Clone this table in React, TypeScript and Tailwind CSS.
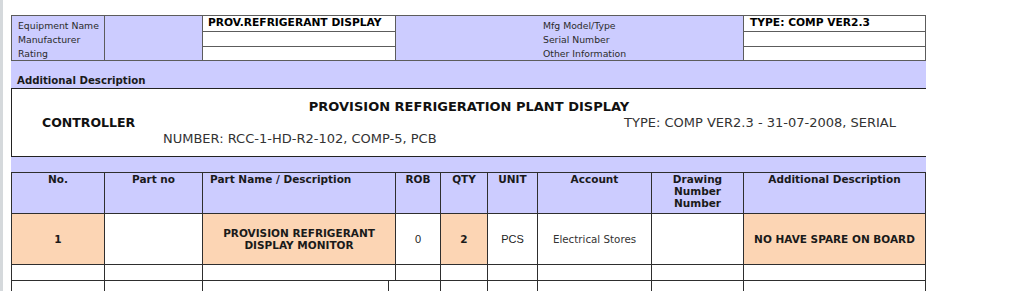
const lav = 'bg-[#ccccff]';
const peach = 'bg-[#fcd5b4]';

const topLabels = ['Equipment Name', 'Manufacturer', 'Rating'];
const midLabels = ['Mfg Model/Type', 'Serial Number', 'Other Information'];

const headers = [
  { text: 'No.', align: 'text-center' },
  { text: 'Part no', align: 'text-center' },
  { text: 'Part Name / Description', align: 'text-left pl-[7px]' },
  { text: 'ROB', align: 'text-center' },
  { text: 'QTY', align: 'text-center' },
  { text: 'UNIT', align: 'text-center' },
  { text: 'Account', align: 'text-center' },
  { text: 'Drawing Number Number', align: 'text-center px-[10px]' },
  { text: 'Additional Description', align: 'text-center' },
];

function InfoGrid() {
  return (
    <div className="grid grid-cols-[92px_97px_192px_347px_181px] grid-rows-[15px_14px_13px] gap-px bg-[#5c5c5c] p-px text-[9.3px] text-[#2b2b2b]">
      <div className={`${lav} row-span-3 pl-[6px] pt-[3px] leading-[14px]`}>
        {topLabels.map((l) => (
          <div key={l}>{l}</div>
        ))}
      </div>
      <div className={`${lav} row-span-3`} />
      <div className="flex items-center bg-white pl-[5px] text-[10.7px] font-bold leading-none text-black">
        PROV.REFRIGERANT DISPLAY
      </div>
      <div className={`${lav} row-span-3 pl-[147px] pt-[3px] leading-[14px]`}>
        {midLabels.map((l) => (
          <div key={l}>{l}</div>
        ))}
      </div>
      <div className="flex items-center bg-white pl-[6px] text-[10.7px] font-bold leading-none text-black">
        TYPE: COMP VER2.3
      </div>
      <div className="bg-white" />
      <div className="bg-white" />
      <div className="bg-white" />
      <div className="bg-white" />
    </div>
  );
}

function DescriptionBox() {
  return (
    <>
      <div className={`${lav} flex h-[27px] items-end pb-px pl-[6px] text-[10.2px] font-bold leading-[12px] text-[#1a1a1a]`}>
        Additional Description
      </div>
      <div className="h-[69px] border-y border-l border-[#222] bg-white pt-[10px] text-[13px] leading-[16px] text-[#111]">
        <div className="text-center font-bold">PROVISION REFRIGERATION PLANT DISPLAY</div>
        <div className="flex items-baseline justify-between pl-[30px] pr-[30px]">
          <span className="text-[12.5px] font-bold">CONTROLLER</span>
          <span className="text-[#333]">TYPE: COMP VER2.3 - 31-07-2008, SERIAL</span>
        </div>
        <div className="pl-[151px] text-[#333]">NUMBER: RCC-1-HD-R2-102, COMP-5, PCB</div>
      </div>
      <div className={`${lav} h-[15px]`} />
    </>
  );
}

function PartsTable() {
  return (
    <>
      <div className="grid grid-cols-[92px_97px_192px_44px_46px_49px_113px_91px_181px] grid-rows-[40px_50px_15px] gap-px bg-[#2e2e2e] p-px text-[10.5px] leading-[12px] text-[#1a1a1a]">
        {headers.map((h) => (
          <div key={h.text} className={`${lav} font-bold ${h.align}`}>
            {h.text}
          </div>
        ))}

        <div className={`${peach} flex items-center justify-center font-bold`}>1</div>
        <div className="bg-white" />
        <div className={`${peach} flex items-center justify-center text-center font-bold`}>
          PROVISION REFRIGERANT
          <br />
          DISPLAY MONITOR
        </div>
        <div className="flex items-center justify-center bg-white font-['Liberation_Sans',Arial,sans-serif] text-[11px] text-[#222]">
          0
        </div>
        <div className={`${peach} flex items-center justify-center font-bold`}>2</div>
        <div className="flex items-center justify-center bg-white font-['Liberation_Sans',Arial,sans-serif] text-[11px] text-[#222]">
          PCS
        </div>
        <div className="flex items-center justify-center bg-white text-[10.3px] text-[#333]">
          Electrical Stores
        </div>
        <div className="bg-white" />
        <div className={`${peach} flex items-center justify-center font-bold`}>NO HAVE SPARE ON BOARD</div>

        {Array.from({ length: 9 }).map((_, i) => (
          <div key={i} className="bg-white" />
        ))}
      </div>
      <div className="grid grid-cols-[92px_97px_185px_51px_46px_49px_113px_91px_181px] grid-rows-[15px] gap-px bg-[#2e2e2e] px-px">
        {Array.from({ length: 9 }).map((_, i) => (
          <div key={i} className="bg-white" />
        ))}
      </div>
    </>
  );
}

export default function App() {
  return (
    <div className="flex h-[291px] overflow-hidden bg-white font-['DejaVu_Sans',Verdana,sans-serif]">
      <div className="w-[3px] shrink-0 bg-[#d5d9dc]" />
      <div className="w-[915px] shrink-0 pl-[8px] pt-[15px]">
        <div className="w-[915px]">
          <InfoGrid />
          <DescriptionBox />
          <PartsTable />
        </div>
      </div>
    </div>
  );
}
